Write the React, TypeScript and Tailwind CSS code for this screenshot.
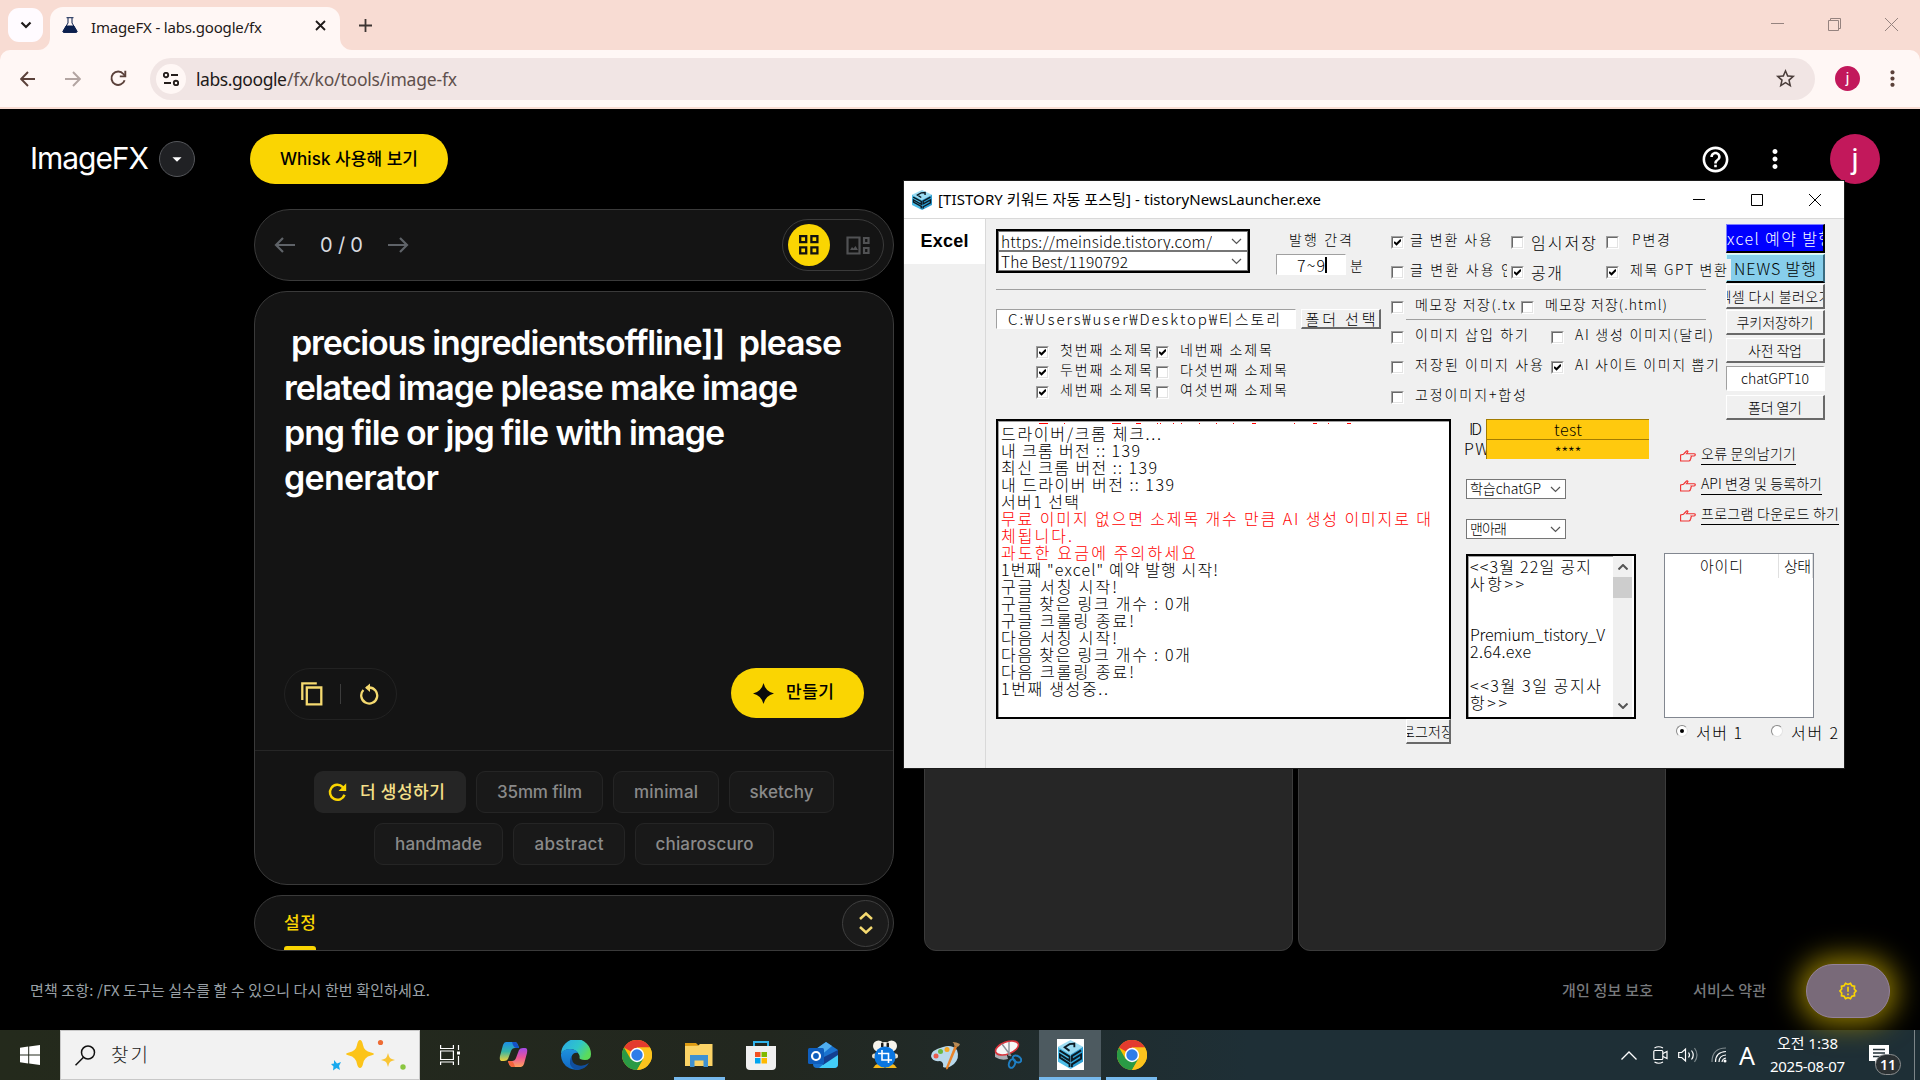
import { useLayoutEffect, useRef, type ReactNode } from "react";
import { MdStarOutline, MdHelpOutline, MdMoreVert, MdArrowDropDown, MdOutlineNewReleases } from "react-icons/md";

/* Text run whose tracking is computed so that it fills `w` pixels. */
function Fit({ w, children, className = "" }: { w: number; children: string; className?: string }) {
  const ref = useRef<HTMLSpanElement>(null);
  useLayoutEffect(() => {
    const el = ref.current;
    if (!el) return;
    el.style.letterSpacing = "0px";
    el.style.width = "max-content";
    const natural = el.getBoundingClientRect().width;
    const n = Math.max(1, children.length - 1);
    el.style.letterSpacing = children.length > 1 ? `${(w - natural) / n}px` : "0px";
    el.style.width = `${w}px`;
  }, [w, children]);
  return (
    <span ref={ref} className={`inline-block shrink-0 whitespace-pre text-left ${className}`}>
      {children}
    </span>
  );
}

/* ---------- browser chrome ---------- */

function TabStrip() {
  return (
    <div className="flex h-[50px] bg-[#f8dcd3] pt-[7px]">
      <div className="ml-2 mt-px flex h-[34px] w-[35px] items-center justify-center rounded-[11px] bg-[#fffbff]">
        <svg width="12" height="8" viewBox="0 0 12 8" fill="none" stroke="#1f1a19" strokeWidth="2.2"><path d="M1.5 1.5 6 6l4.5-4.5" /></svg>
      </div>
      <svg className="-ml-[5px] mr-0 mt-[31px]" width="12" height="12" viewBox="0 0 12 12"><path d="M12 0A12 12 0 0 1 0 12H12Z" fill="#fff7f5" /></svg>
      <div className="flex h-[43px] w-[290px] items-start rounded-t-[13px] bg-[#fff7f5] pl-3 pt-[10px]">
        <svg width="16" height="16" viewBox="0 0 16 16" fill="none" stroke="#0b1f4d"><path d="M4.5.7h7M6 1v5L1 14.2Q.7 15.3 2 15.3h12q1.3 0 1-1.1L10 6V1" /><path d="M4.2 9h7.6l3 5.4q0 .9-1 .9H2q-1 0-.8-.9Z" fill="#0b1f4d" /></svg>
        <Fit w={171} className="ml-[13px] font-['Noto_Sans'] text-[15px] leading-[20px] text-[#231a18]">ImageFX - labs.google/fx</Fit>
        <svg className="ml-[53px] mt-[3px]" width="11" height="11" viewBox="0 0 11 11" stroke="#1f1a19" strokeWidth="1.8"><path d="m1 1 9 9M10 1l-9 9" /></svg>
      </div>
      <svg className="mt-[31px]" width="12" height="12" viewBox="0 0 12 12"><path d="M0 0A12 12 0 0 0 12 12H0Z" fill="#fff7f5" /></svg>
      <svg className="ml-[7px] mt-3" width="13" height="13" viewBox="0 0 13 13" stroke="#3d3533" strokeWidth="1.8"><path d="M6.5 0v13M0 6.5h13" /></svg>
      <div className="ml-auto mr-[22px] mt-[11px] flex items-start gap-[44px]">
        <svg width="13" height="13" viewBox="0 0 13 13" stroke="#95837f"><path d="M0 5.5h13" /></svg>
        <svg width="13" height="13" viewBox="0 0 13 13" fill="none" stroke="#95837f"><path d="M.5 2.5h10v10H.5zM2.5 2.5v-2h10v10h-2" /></svg>
        <svg width="13" height="13" viewBox="0 0 13 13" stroke="#95837f"><path d="m0 0 13 13M13 0 0 13" /></svg>
      </div>
    </div>
  );
}

function AddressBar() {
  return (
    <div className="bg-[#f8dcd3]">
      <div className="flex h-[57px] items-center rounded-t-[10px] bg-[#fff7f5] pl-5">
        <svg width="16" height="16" viewBox="0 0 16 16" fill="none" stroke="#5b413a" strokeWidth="1.9"><path d="M15 8H1.5M8 1 1.2 8 8 15" /></svg>
        <svg className="ml-[29px]" width="16" height="16" viewBox="0 0 16 16" fill="none" stroke="#b3a5a2" strokeWidth="1.9"><path d="M0 8h14.5M8 1l6.8 7L8 15" /></svg>
        <svg className="ml-[29px]" width="17" height="17" viewBox="0 0 17 17" fill="none" stroke="#5b413a" strokeWidth="1.9"><path d="M14.6 10.2A6.7 6.7 0 1 1 13.4 4L15 6" /><path d="M15.3.8v5.6H9.8" /></svg>
        <div className="ml-[23px] flex h-[42px] w-[1665px] items-center rounded-full bg-[#f1e5e4] pl-[6px]">
          <span className="flex size-[30px] items-center justify-center rounded-full bg-[#fff7f5]">
            <svg width="16" height="14" viewBox="0 0 16 14" fill="none" stroke="#251d1b" strokeWidth="1.9"><circle cx="3" cy="3" r="2.2" /><path d="M8 3h7M1 11h7" /><circle cx="13" cy="11" r="2.2" /></svg>
          </span>
          <span className="ml-[10px] flex pt-px font-['Noto_Sans'] text-[17.5px] text-[#211a19]">
            <Fit w={91}>labs.google</Fit>
            <Fit w={170} className="text-[#5f504c]">/fx/ko/tools/image-fx</Fit>
          </span>
          <MdStarOutline className="ml-auto mr-[18px] size-[23px] text-[#4b3e3b]" />
        </div>
        <span className="ml-5 flex size-[25px] items-center justify-center rounded-full bg-[#c2185b] font-[Roboto] text-[15px] leading-none text-white">j</span>
        <MdMoreVert className="ml-[20px] size-[25px] text-[#5b413a]" />
      </div>
      <div className="h-[2px]" />
    </div>
  );
}

/* ---------- page ---------- */

const KR = "font-[Inter,'Noto_Sans_CJK_KR',sans-serif]";

function PageHeader() {
  return (
    <div className="flex h-[100px] items-center pl-[30px]">
      <Fit w={119} className="-mt-px font-[Inter,sans-serif] text-[30px] text-white">ImageFX</Fit>
      <span className="ml-[10px] flex size-9 items-center justify-center rounded-full border border-[#55575b] bg-[#202124] text-white"><MdArrowDropDown className="size-[22px]" /></span>
      <span className="ml-[55px] flex h-[50px] w-[198px] items-center justify-center rounded-full bg-[#fad502] font-medium text-black">
        <Fit w={138} className={"text-[17px] font-medium leading-6 " + KR}>Whisk 사용해 보기</Fit>
      </span>
      <MdHelpOutline className="ml-auto size-[31px] text-white" />
      <MdMoreVert className="ml-[29px] size-[30px] text-white" />
      <span className="ml-10 mr-10 flex size-[50px] items-center justify-center rounded-full bg-[#c2185b] font-[Roboto] text-[30px] leading-none text-white">j</span>
    </div>
  );
}

function Chip({ w, t, children }: { w: string; t: number; children: string }) {
  return (
    <span className={`flex h-[42px] items-center justify-center rounded-[9px] border border-[#252525] bg-[#191919] ${w}`}>
      <Fit w={t} className="mt-[2px] font-[Inter,sans-serif] text-[17px] font-medium text-[#8a8a8a]">{children}</Fit>
    </span>
  );
}

function PromptPanel() {
  return (
    <div className="w-[640px]">
      <div className="flex h-[72px] items-center rounded-full border border-[#3a3a3a] bg-[#141414] pl-[19px] pr-[9px]">
        <svg width="21" height="16" viewBox="0 0 21 16" fill="none" stroke="#5f6368" strokeWidth="2.2"><path d="M21 8H2M9 1 2 8l7 7" /></svg>
        <Fit w={43} className="ml-[25px] font-[Inter,sans-serif] text-[20px] text-[#dadce0]">0 / 0</Fit>
        <svg className="ml-[25px]" width="21" height="16" viewBox="0 0 21 16" fill="none" stroke="#5f6368" strokeWidth="2.2"><path d="M0 8h19M12 1l7 7-7 7" /></svg>
        <div className="ml-auto flex h-[52px] w-[102px] items-center rounded-full border border-[#3a3a3a] pl-[5px]">
          <span className="flex size-[42px] items-center justify-center rounded-full bg-[#fad502] text-black">
            <svg width="20" height="20" viewBox="0 0 20 20" fill="none" stroke="#111" strokeWidth="2.3"><path d="M1.2 1.2h6v6h-6zM12.4 1.2h6v6h-6zM1.2 12.4h6v6h-6zM12.4 12.4h6v6h-6z" /></svg>
          </span>
          <svg className="ml-[16px]" width="24" height="19" viewBox="0 0 24 19" fill="none" stroke="#515254" strokeWidth="2.200"><path d="M1.500 1.500h12v16h-12zM18 2h4.500v5H18zM18 12h4.500v5H18z" /><path d="M4 14 6 11l1.500 1.500L9.500 10 12 14Z" fill="#515254" stroke="none" /></svg>
        </div>
      </div>

      <div className="mt-[10px] flex h-[594px] flex-col rounded-[33px] border border-[#3a3a3a] bg-[#141414]">
        <div className="flex h-[376px] flex-col pl-[29px] pt-[28px] font-[Inter,sans-serif] text-[34px] font-semibold leading-[45px] text-white">
          <Fit w={551} className="ml-[7px]">{"precious ingredientsoffline]]  please"}</Fit>
          <Fit w={514}>related image please make image</Fit>
          <Fit w={441}>png file or jpg file with image</Fit>
          <Fit w={155}>generator</Fit>
        </div>
        <div className="flex h-[83px] items-start border-b border-[#262626] pl-[29px] pr-[29px]">
          <div className="flex h-[52px] w-[113px] items-center rounded-full border border-[#222] pl-4">
            <svg width="22" height="24" viewBox="0 0 22 24" fill="none" stroke="#f5da70" strokeWidth="2.300"><path d="M1.300 18V1.300h14.500M5.800 5.500h14.500v16.800H5.800z" /></svg>
            <span className="ml-[17px] h-5 w-px bg-[#3c3c3c]" />
            <svg className="ml-[18px]" width="20" height="22" viewBox="0 0 20 22" fill="none" stroke="#f5da70" strokeWidth="2.300"><path d="M4.400 7A8 8 0 1 0 10 4.500H7.500" /><path d="M11 .5 6 4.700l5 4.200Z" fill="#f5da70" stroke="none" /></svg>
          </div>
          <div className="ml-auto flex h-[50px] w-[133px] items-center rounded-full bg-[#fad502] pl-[22px]">
            <svg width="21" height="21" viewBox="0 0 21 21"><path d="M10.500 0q2 8.500 10.500 10.500Q12.500 12.500 10.500 21 8.500 12.500 0 10.500 8.500 8.500 10.500 0Z" fill="#0a0a0a" /></svg>
            <Fit w={48} className="-mt-[5px] ml-3 font-['Noto_Sans_CJK_KR'] text-[17px] font-medium leading-6 text-black">만들기</Fit>
          </div>
        </div>
        <div className="mt-[20px] flex justify-center gap-[10px]">
          <span className="flex h-[42px] w-[152px] items-center rounded-[9px] bg-[#252525] pl-[14px]">
            <svg width="19" height="19" viewBox="0 0 17 17" fill="none" stroke="#fad502" strokeWidth="2.200"><path d="M14.800 10.500A6.700 6.700 0 1 1 13.200 3.600L15 5.500" /><path d="M16.300.3v6.900H9.500Z" fill="#fad502" stroke="none" /></svg>
            <Fit w={85} className="-mt-[2px] ml-[13px] font-['Noto_Sans_CJK_KR'] text-[17px] font-medium leading-6 text-[#f5e08a]">더 생성하기</Fit>
          </span>
          <Chip w="w-[127px]" t={85}>35mm film</Chip>
          <Chip w="w-[106px]" t={64}>minimal</Chip>
          <Chip w="w-[105px]" t={64}>sketchy</Chip>
        </div>
        <div className="mt-[10px] flex justify-center gap-[10px]">
          <Chip w="w-[129px]" t={87}>handmade</Chip>
          <Chip w="w-[112px]" t={69}>abstract</Chip>
          <Chip w="w-[139px]" t={98}>chiaroscuro</Chip>
        </div>
      </div>

      <div className="mt-[10px] flex h-[56px] items-center rounded-full border border-[#3a3a3a] bg-[#141414] pl-[29px] pr-1">
        <span className="flex h-full flex-col pt-[14px]">
          <Fit w={32} className="font-['Noto_Sans_CJK_KR'] text-[17px] font-medium leading-6 text-[#fad502]">설정</Fit>
          <span className="mt-auto h-1 w-8 rounded-t-[3px] bg-[#fad502]" />
        </span>
        <span className="ml-auto flex size-[47px] items-center justify-center rounded-full border border-[#3f3f3f] bg-[#1b1b1b]">
          <svg width="14" height="22" viewBox="0 0 14 22" fill="none" stroke="#f5da70" strokeWidth="2.500"><path d="m1 7 6-5.500L13 7M1 15l6 5.500 6-5.500" /></svg>
        </span>
      </div>
    </div>
  );
}

function Page() {
  return (
    <div className="flex h-[921px] flex-col bg-black">
      <PageHeader />
      <div className="flex pl-[254px]">
        <PromptPanel />
        <div className="ml-[30px] flex gap-[5px]">
          <div className="h-[742px] w-[369px] rounded-[12px] border border-[#3b3b3b] bg-[#262626]" />
          <div className="h-[742px] w-[368px] rounded-[12px] border border-[#3b3b3b] bg-[#262626]" />
        </div>
      </div>
      <div className="flex flex-1 items-center pl-[30px] pr-[30px] font-['Noto_Sans_CJK_KR'] text-[15px] leading-5">
        <Fit w={400} className="-mt-[2px] text-[#9aa0a6]">면책 조항: /FX 도구는 실수를 할 수 있으니 다시 한번 확인하세요.</Fit>
        <Fit w={91} className="-mt-[2px] ml-auto font-medium text-[#77797c]">개인 정보 보호</Fit>
        <Fit w={73} className="-mt-[2px] ml-10 font-medium text-[#77797c]">서비스 약관</Fit>
        <span className="ml-10 flex h-[54px] w-[84px] items-center justify-center rounded-full border border-[#94829a] bg-[#796a79] shadow-[0_0_28px_7px_#8f7a00]">
          <MdOutlineNewReleases className="size-[20px] text-[#fad502]" />
        </span>
      </div>
    </div>
  );
}

/* ---------- launcher window ---------- */

function CubeIcon({ className = "" }: { className?: string }) {
  return (
    <svg className={className} viewBox="0 0 26 28" preserveAspectRatio="none">
      <path d="M13 0 26 6.500 13 14 0 6.500Z" fill="#9cdcf3" />
      <path d="M0 6.500 13 14V28L0 21Z" fill="#4dbde8" />
      <path d="M26 6.500 13 14V28L26 21Z" fill="#2d9fd4" />
      <path d="M17 7V3.500L12 4 7 7l5 3.500M1.500 10 12 16v4L2 14v3l10 6v3M24 10l-9.500 5.500v4L24 14v4l-9.500 5.500V26" fill="none" stroke="#0c1a24" strokeWidth="1.900" />
    </svg>
  );
}

function Box({ on = false }: { on?: boolean }) {
  return (
    <span className="flex size-[13px] shrink-0 border border-b-white border-l-[#a0a0a0] border-r-white border-t-[#a0a0a0]">
      <span className="flex size-full items-center justify-center border border-b-[#e3e3e3] border-l-[#696969] border-r-[#e3e3e3] border-t-[#696969] bg-white">
        {on && <svg width="7" height="7" viewBox="0 0 7 7" fill="none" stroke="#000" strokeWidth="2"><path d="M0 3 2.500 5.300 7 .8" /></svg>}
      </span>
    </span>
  );
}

function Option({ on, cell = "", gap = "ml-[11px]", t, label }: { on?: boolean; cell?: string; gap?: string; t: number; label: string }) {
  return (
    <span className={`flex h-full shrink-0 items-center ${cell}`}>
      <Box on={on} />
      <Fit w={t} className={`${gap} -mt-[6px] leading-5`}>{label}</Fit>
    </span>
  );
}

function PushButton({ className, t, children }: { className: string; t: number; children: string }) {
  return (
    <span className={`flex w-[99px] shrink-0 items-center justify-center overflow-hidden border border-b-2 border-r-2 ${className}`}>
      <Fit w={t} className="-mt-px leading-5">{children}</Fit>
    </span>
  );
}

const GRAY_BTN = "border-b-[#696969] border-r-[#696969] border-l-white border-t-white bg-[#f0f0f0]";

function Caret() {
  return <svg width="11" height="7" viewBox="0 0 11 7" fill="none" stroke="#555" strokeWidth="1.200"><path d="m1 1 4.500 4.500L10 1" /></svg>;
}

function Combo({ t, children }: { t: number; children: string }) {
  return (
    <span className="flex h-5 items-center border border-[#767676] bg-white pl-[2px] pr-[5px]">
      <span className="h-[18px] overflow-hidden"><Fit w={t} className="text-[15.500px] leading-[19px]">{children}</Fit></span>
      <span className="ml-auto"><Caret /></span>
    </span>
  );
}

function Settings() {
  return (
    <div className="w-[710px] shrink-0">
      <div className="flex h-[71px] border-b border-[#a0a0a0]">
        <div className="mt-[10px] flex h-[44px] w-[254px] shrink-0 flex-col border-2 border-black bg-white">
          <Combo t={211}>https://meinside.tistory.com/</Combo>
          <Combo t={127}>The Best/1190792</Combo>
        </div>
        <div className="ml-[26px] flex w-[115px] shrink-0 flex-col pt-[10px]">
          <Fit w={63} className="ml-[13px] leading-5">발행 간격</Fit>
          <div className="mt-[5px] flex items-center">
            <span className="flex h-[21px] w-[70px] items-center border border-b-white border-l-[#a0a0a0] border-r-white border-t-[#a0a0a0] bg-white pl-5">
              <Fit w={28} className="text-[16px] leading-5">7~9</Fit>
              <span className="h-4 w-[2px] bg-black" />
            </span>
            <Fit w={13} className="ml-1 leading-5">분</Fit>
          </div>
        </div>
        <div className="flex flex-col pt-[8px]">
          <div className="flex h-[30px]">
            <Option on cell="w-[120px]" gap="ml-[6px]" t={82} label="글 변환 사용" />
            <span className="flex w-[95px] shrink-0 items-center"><Box /><Fit w={65} className="-mt-px ml-[7px] text-[16px] leading-5">임시저장</Fit></span>
            <Option gap="ml-[13px]" t={38} label="P변경" />
          </div>
          <div className="flex h-[30px]">
            <span className="flex w-[116px] shrink-0 overflow-hidden"><Option gap="ml-[6px]" t={104} label="글 변환 사용 안" /></span>
            <span className="ml-1 flex w-[95px] shrink-0 items-center bg-[#f0f0f0]"><Box on /><Fit w={31} className="-mt-px ml-[7px] text-[16px] leading-5">공개</Fit></span>
            <span className="z-10 flex shrink-0 items-center"><Box on /><span className="-mt-[6px] ml-[8px] bg-[#f0f0f0] pl-[3px] pr-1"><Fit w={97} className="block leading-5">제목 GPT 변환</Fit></span></span>
          </div>
        </div>
      </div>
      <div className="flex">
        <div className="w-[395px] shrink-0 pt-[19px]">
          <div className="flex">
            <span className="flex h-5 w-[300px] items-center border border-b-white border-l-[#a0a0a0] border-r-white border-t-[#a0a0a0] bg-white pl-[11px]">
              <Fit w={272} className="text-[15px] leading-5">C:₩Users₩user₩Desktop₩티스토리</Fit>
            </span>
            <span className={`ml-[5px] flex h-5 w-20 items-center justify-center overflow-hidden border border-b-2 border-r-2 ${GRAY_BTN}`}>
              <Fit w={70} className="text-[15px] leading-5">폴더 선택</Fit>
            </span>
          </div>
          <div className="ml-10 mt-[13px] grid auto-rows-[20px] grid-cols-[120px_160px]">
            <Option on t={92} label="첫번째 소제목" />
            <Option on t={92} label="네번째 소제목" />
            <Option on t={92} label="두번째 소제목" />
            <Option t={107} label="다섯번째 소제목" />
            <Option on t={92} label="세번째 소제목" />
            <Option t={107} label="여섯번째 소제목" />
          </div>
        </div>
        <div className="flex flex-col pt-[2px]">
          <div className="flex h-[30px]">
            <span className="flex w-[125px] shrink-0 overflow-hidden"><Option t={106} label="메모장 저장(.txt" /></span>
            <span className="ml-[5px] shrink-0 bg-[#f0f0f0]"><Option t={122} label="메모장 저장(.html)" /></span>
          </div>
          <div className="-mt-[3px] mb-[2px] ml-[15px] h-px w-[300px] bg-[#a0a0a0]" />
          <div className="flex h-[30px]">
            <Option cell="w-[160px]" t={113} label="이미지 삽입 하기" />
            <Option t={138} label="AI 생성 이미지(달리)" />
          </div>
          <div className="flex h-[30px]">
            <Option cell="w-[160px]" t={128} label="저장된 이미지 사용" />
            <Option on t={144} label="AI 사이트 이미지 뽑기" />
          </div>
          <div className="flex h-[30px]"><Option t={111} label="고정이미지+합성" /></div>
        </div>
      </div>
    </div>
  );
}

function SideButtons() {
  return (
    <div className="ml-5 flex flex-col pt-[5px]">
      <PushButton className="h-[29px] border-b-black border-l-[#7f7fff] border-r-black border-t-[#7f7fff] bg-[#0000ff] text-[16px] text-white" t={116}>Excel 예약 발행</PushButton>
      <PushButton className="mt-px h-[29px] border-b-black border-l-[#c9ffff] border-r-[#3a6b80] border-t-[#c9ffff] bg-[#87ceeb] text-[16px]" t={82}>NEWS 발행</PushButton>
      <PushButton className={`mt-px h-[25px] ${GRAY_BTN}`} t={113}>엑셀 다시 불러오기</PushButton>
      <PushButton className={`mt-[1px] h-[25px] ${GRAY_BTN}`} t={77}>쿠키저장하기</PushButton>
      <PushButton className={`mt-[3px] h-[25px] ${GRAY_BTN}`} t={54}>사전 작업</PushButton>
      <PushButton className="mt-[3px] h-[25px] border-b-white border-l-[#a0a0a0] border-r-white border-t-[#a0a0a0] bg-white" t={68}>chatGPT10</PushButton>
      <PushButton className={`mt-[4px] h-[25px] ${GRAY_BTN}`} t={54}>폴더 열기</PushButton>
    </div>
  );
}

const LOG: [string, number, boolean?][] = [
  ["드라이버/크롬 체크...", 160],
  ["내 크롬 버전 :: 139", 139],
  ["최신 크롬 버전 :: 139", 156],
  ["내 드라이버 버전 :: 139", 173],
  ["서버1 선택", 78],
  ["무료 이미지 없으면 소제목 개수 만큼 AI 생성 이미지로 대", 430, true],
  ["체됩니다.", 71, true],
  ["과도한 요금에 주의하세요", 195, true],
  ['1번째 "excel" 예약 발행 시작!', 217],
  ["구글 서칭 시작!", 116],
  ["구글 찾은 링크 개수 : 0개", 189],
  ["구글 크롤링 종료!", 133],
  ["다음 서칭 시작!", 116],
  ["다음 찾은 링크 개수 : 0개", 189],
  ["다음 크롤링 종료!", 133],
  ["1번째 생성중..", 107],
];

function LogColumn() {
  return (
    <div className="flex w-[455px] flex-col items-end">
      <div className="flex h-[300px] w-full flex-col overflow-hidden border-2 border-black bg-white">
        <div className="h-full border-l border-t border-[#a0a0a0] pl-[2px] text-[16px]">
          <svg className="-mt-px block" width="440" height="4" viewBox="0 0 440 4" stroke="#f00"><path d="M38 2.500h9M63 2.500h1M111 2.500h9M135 2.500h5M156 2.500h1M159 2.500h1M172 2.500h1M180 2.500h1M198 2.500h1M215 2.500h1M232 2.500h1M251 2.500h4M293 2.500h1M312 2.500h4M327 2.500h1M346 2.500h4" /></svg>
          {LOG.map(([text, w, red], i) => (
            <div key={i} className={red ? "flex h-[17px] text-[#ff0000]" : "flex h-[17px]"}>
              <Fit w={w} className="leading-[17px]">{text}</Fit>
            </div>
          ))}
        </div>
      </div>
      <span className={`flex h-[25px] w-[45px] items-center justify-center overflow-hidden border border-b-2 border-r-2 ${GRAY_BTN}`}><Fit w={52} className="leading-5">로그저장</Fit></span>
    </div>
  );
}

function SmallSelect({ t, children }: { t: number; children: string }) {
  return (
    <span className="flex h-5 w-[100px] items-center border border-[#767676] bg-white pl-[3px] pr-[4px]">
      <Fit w={t} className="-mt-[2px] leading-[18px]">{children}</Fit>
      <span className="ml-auto"><Caret /></span>
    </span>
  );
}

function AccountColumn() {
  return (
    <div className="ml-[15px] w-[183px]">
      <div className="flex text-[16px]">
        <div className="-ml-[2px] flex w-[22px] flex-col overflow-hidden">
          <Fit w={13} className="ml-[5px] leading-[19px]">ID</Fit>
          <Fit w={25} className="leading-[21px]">PW</Fit>
        </div>
        <div className="w-[163px] text-center">
          <div className="flex h-5 items-center justify-center border-l border-t border-[#a37c00] bg-[#ffc90e]"><Fit w={28} className="-mt-px leading-[18px]">test</Fit></div>
          <div className="flex h-5 items-center justify-center border-l border-t border-[#a37c00] bg-[#ffc90e]"><Fit w={27} className="mt-[5px] leading-[18px]">****</Fit></div>
        </div>
      </div>
      <div className="mt-5 flex flex-col gap-5">
        <SmallSelect t={71}>학습chatGP</SmallSelect>
        <SmallSelect t={37}>맨아래</SmallSelect>
      </div>
      <div className="mt-[15px] flex h-[165px] w-[170px] border-2 border-black bg-white">
        <div className="flex w-[145px] flex-col border-l border-t border-[#a0a0a0] pl-px pt-px text-[16px] leading-[17px]">
          <Fit w={121}>{"<<3월 22일 공지"}</Fit>
          <Fit w={54}>{"사항>>"}</Fit>
          <Fit w={135} className="mt-[34px]">Premium_tistory_V</Fit>
          <Fit w={61}>2.64.exe</Fit>
          <Fit w={131} className="mt-[17px]">{"<<3월 3일 공지사"}</Fit>
          <Fit w={37}>{"항>>"}</Fit>
        </div>
        <div className="flex w-[19px] flex-col items-center bg-[#f0f0f0] py-2">
          <svg width="10" height="6" viewBox="0 0 10 6" fill="none" stroke="#555" strokeWidth="2"><path d="m.5 5.500 4.500-4.500 4.500 4.500" /></svg>
          <span className="mt-[7px] h-[21px] w-[19px] bg-[#cdcdcd]" />
          <svg className="mt-auto" width="10" height="6" viewBox="0 0 10 6" fill="none" stroke="#555" strokeWidth="2"><path d="m.5.5 4.500 4.500L9.500.5" /></svg>
        </div>
      </div>
    </div>
  );
}

function HandLink({ t, children }: { t: number; children: string }) {
  return (
    <span className="flex h-[30px] items-center">
      <svg className="mt-[5px]" width="16" height="12" viewBox="0 0 16 12" fill="none" stroke="#f03030" strokeWidth="1.100"><path d="M.6 5v6H9q1.500-.2 1.300-1.700 1-.6.500-1.700.8-.7.300-1.600H14q1.300-.2 1.300-1.200T14 3.800H6.500L8 1.500Q7.500.5 6.500 1L3.500 4.200Z" /></svg>
      <span className="ml-[5px] mt-px border-b border-black"><Fit w={t} className="block h-[15px] leading-[14px]">{children}</Fit></span>
    </span>
  );
}

function LinksColumn() {
  return (
    <div className="ml-[15px]">
      <div className="flex h-[134px] flex-col pl-4 pt-[19px]">
        <HandLink t={95}>오류 문의남기기</HandLink>
        <HandLink t={121}>API 변경 및 등록하기</HandLink>
        <HandLink t={138}>프로그램 다운로드 하기</HandLink>
      </div>
      <div className="flex h-[165px] w-[150px] items-start overflow-hidden border border-[#828790] bg-white font-['Noto_Sans_CJK_KR']">
        <span className="flex h-6 w-[114px] items-center justify-center border-r border-[#e0e0e0]"><Fit w={43} className="text-[15px]">아이디</Fit></span>
        <span className="flex h-6 w-[34px] items-center overflow-hidden border-r border-[#e0e0e0] pl-[5px]"><Fit w={27} className="text-[15px]">상태</Fit></span>
      </div>
      <div className="mt-[4px] flex h-5 items-center pl-[12px] text-[16px] leading-5">
        <span className="-mt-[2px] flex size-3 items-center justify-center rounded-full border border-[#8a8a8a] border-b-[#e3e3e3] border-r-[#e3e3e3] bg-white"><span className="size-1 rounded-full bg-black" /></span>
        <Fit w={46} className="ml-[8px]">서버 1</Fit>
        <span className="-mt-[2px] ml-[29px] size-3 rounded-full border border-[#8a8a8a] border-b-[#e3e3e3] border-r-[#e3e3e3] bg-white" />
        <Fit w={47} className="ml-[8px]">서버 2</Fit>
      </div>
    </div>
  );
}

function Launcher() {
  return (
    <div className="absolute left-[903px] top-[180px] h-[589px] w-[942px] overflow-hidden border border-[#1c1c1c] bg-[#f0f0f0] font-['Noto_Sans_CJK_KR',sans-serif] text-[14px] font-light text-black">
      <div className="flex h-[38px] items-center border-b border-[#d9d9d9] bg-white pl-2">
        <CubeIcon className="size-5" />
        <Fit w={383} className="-mt-px ml-[6px] font-['Noto_Sans','Noto_Sans_CJK_KR'] text-[15px] font-normal leading-5">[TISTORY 키워드 자동 포스팅] - tistoryNewsLauncher.exe</Fit>
        <div className="ml-auto mr-[23px] flex gap-[46px]">
          <svg width="12" height="12" viewBox="0 0 12 12" stroke="#000"><path d="M0 5.500h12" /></svg>
          <svg width="12" height="12" viewBox="0 0 12 12" fill="none" stroke="#000"><path d="M.5.500h11v11H.5z" /></svg>
          <svg width="12" height="12" viewBox="0 0 12 12" stroke="#000"><path d="m0 0 12 12M12 0 0 12" /></svg>
        </div>
      </div>
      <div className="flex h-[549px]">
        <div className="w-[82px] shrink-0 border-r border-[#d9d9d9]">
          <div className="flex h-[45px] items-center justify-center bg-white"><Fit w={48} className="font-['Liberation_Sans'] text-[18px] font-bold">Excel</Fit></div>
        </div>
        <div className="shrink-0 pl-[10px]">
          <div className="flex h-[200px]"><Settings /><SideButtons /></div>
          <div className="flex"><LogColumn /><AccountColumn /><LinksColumn /></div>
        </div>
      </div>
    </div>
  );
}

/* ---------- taskbar ---------- */

function Chrome() {
  return (
    <svg width="30" height="30" viewBox="0 0 30 30">
      <circle cx="15" cy="15" r="15" fill="#fbbc05" />
      <path d="M15 15 2 7.500A15 15 0 0 1 28 7.500H15Z" fill="#e33b2e" />
      <path d="M2 7.500A15 15 0 0 0 15 30L21.500 18.700 8.500 18.700Z" fill="#2a9a45" />
      <path d="M28 7.500H15L21.500 18.700 15 30A15 15 0 0 0 28 7.500Z" fill="#fcc31e" />
      <circle cx="15" cy="15" r="7.200" fill="#fff" />
      <circle cx="15" cy="15" r="5.700" fill="#2f7de9" />
    </svg>
  );
}

function Task({ children, open = false, active = false }: { children: ReactNode; open?: boolean; active?: boolean }) {
  return (
    <div className={`flex h-[50px] w-[61.8px] shrink-0 flex-col items-center ${active ? "bg-[#4d5a60]" : ""}`}>
      <div className="flex h-[47px] items-center pt-[2px]">{children}</div>
      {open && <div className={`h-[3px] bg-[#76b9ed] ${active ? "w-full" : "w-[51px]"}`} />}
    </div>
  );
}

function Taskbar() {
  return (
    <div className="flex h-[50px] bg-linear-to-r from-[#242a1c] from-0% via-[#22271f] via-40% to-[#1e2f36] to-65%">
      <div className="flex w-[60px] items-center justify-center">
        <svg width="20" height="20" viewBox="0 0 20 20" fill="#fff"><path d="M0 2.800 8.200 1.600v7.900H0zM9.200 1.500 20 0v9.500H9.200zM0 10.500h8.200v7.900L0 17.200zM9.200 10.500H20V20L9.200 18.500z" /></svg>
      </div>
      <div className="flex w-[360px] items-center border border-[#c8c8c8] bg-[#f2f2f2] pl-[14px]">
        <svg width="21" height="21" viewBox="0 0 21 21" fill="none" stroke="#111" strokeWidth="1.500"><circle cx="13" cy="7.500" r="6.500" /><path d="M8.500 12.200.5 20.300" /></svg>
        <Fit w={37} className="-mt-[3px] ml-[15px] font-['Noto_Sans_CJK_KR'] text-[19px] font-light leading-7 text-[#1b1b1b]">찾기</Fit>
        <svg className="ml-auto mr-[11px]" width="78" height="32" viewBox="0 0 78 32">
          <path d="M30 1q2 0 3 5 1 6 8 7.500 3 .7 3 1.500t-3 1.500q-7 1.500-8 8.500-1 4-3 4t-3-4q-1-7-8-8.500-3-.7-3-1.500t3-1.500q7-1.500 8-7.500 1-5 3-5Z" fill="#fcc419" />
          <path d="M58 14q1 4 2 5 1 .8 5 2-4 1.200-5 2-1 1-2 5-1-4-2-5-1-.8-5-2 4-1.200 5-2 1-1 2-5Z" fill="#f9c534" />
          <path d="m4 21 3 3.500L11 23l-2 4 1 4-3.500-2L3 31.500l.5-4L1 25l3-.5Z" fill="#19a9ee" />
          <circle cx="50.500" cy="3.500" r="2.600" fill="#ee6c34" /><circle cx="73" cy="28" r="2.700" fill="#8ac640" />
        </svg>
      </div>
      <div className="flex w-[63px] items-center pl-5">
        <svg width="21" height="20" viewBox="0 0 21 20" fill="none" stroke="#fff" strokeWidth="1.200"><path d="M.6 0v3.500h12.800V0M.6 6h12.800v8.500H.6zM.6 20v-3h12.800v3M18.500 0v5M18.500 11v9" /><path d="M17 6.500h3v3h-3z" fill="#fff" stroke="none" /></svg>
      </div>
      <Task>
        <svg width="29" height="27" viewBox="0 0 29 27">
          <defs>
            <linearGradient id="cpA" x1="0" y1="0" x2="0" y2="1"><stop offset="0" stopColor="#1b8de8" /><stop offset=".5" stopColor="#35b6a6" /><stop offset="1" stopColor="#f2d13a" /></linearGradient>
            <linearGradient id="cpB" x1="0" y1="0" x2="0" y2="1"><stop offset="0" stopColor="#a349e6" /><stop offset=".5" stopColor="#ec5598" /><stop offset="1" stopColor="#ffa35c" /></linearGradient>
          </defs>
          <path d="M7 1h9q2 0 3 3l1 3h-4q-3 0-4 3l-3 8q-1 2-4 2H3q-3 0-2-5L4 4q1-3 3-3Z" fill="url(#cpA)" />
          <path d="M22 26h-9q-2 0-3-3l-1-3h4q3 0 4-3l3-8q1-2 4-2h2q3 0 2 5l-3 11q-1 3-3 3Z" fill="url(#cpB)" />
          <path d="M13 1h3q2 0 3 3l1 3h-3q-2 0-3-3Z" fill="#1550c8" /><path d="M16 26h-3q-2 0-3-3l-1-3h3q2 0 3 3Z" fill="#f4643c" />
        </svg>
      </Task>
      <Task>
        <svg width="30" height="30" viewBox="0 0 30 30">
          <defs>
            <linearGradient id="edA" x1="0" y1="0" x2="1" y2=".5"><stop offset="0" stopColor="#2aa6e8" /><stop offset=".6" stopColor="#2fc6c9" /><stop offset="1" stopColor="#5bdb5a" /></linearGradient>
            <linearGradient id="edB" x1="0" y1="0" x2="0" y2="1"><stop offset="0" stopColor="#1d92dd" /><stop offset="1" stopColor="#1268c4" /></linearGradient>
          </defs>
          <path d="M0 14A15 15 0 0 1 30 14q0 6-6 6-6 0-5.500-2.500.5-1-.5-3Q15 9 9 9 2 9.500 0 14Z" fill="url(#edA)" />
          <path d="M0 14q2-5 9-5 6 0 8 4-5-1-6.500 4Q9.500 25 18 28q4 1 7-2A15 15 0 0 1 0 14Z" fill="url(#edB)" />
          <path d="M11 16q-1 7 5 9 6 2 12-2-4 7-13 7-7-3-6-9 0-3 2-5Z" fill="#104f9e" />
        </svg>
      </Task>
      <Task><Chrome /></Task>
      <Task open>
        <svg width="28" height="25" viewBox="0 0 28 25"><path d="M0 1h11l3 3H0z" fill="#dd9b13" /><path d="M0 4l13-.2L15 2h12.500v22H0z" fill="#fbd366" /><path d="M5 25V13h18v12h-4.500v-6.500h-9V25Z" fill="#3f91d2" /></svg>
      </Task>
      <Task>
        <svg width="30" height="30" viewBox="0 0 30 30"><path d="M8 7V2h14v5" fill="none" stroke="#31b3ec" strokeWidth="2" /><path d="M0 6h30v20q0 4-4 4H4q-4 0-4-4Z" fill="#f0f0f0" /><path d="M9 12h5.500v5H9z" fill="#f25022" /><path d="M15.500 12H21v5h-5.500z" fill="#7fba00" /><path d="M9 18h5.500v5.500H9z" fill="#00a4ef" /><path d="M15.500 18H21v5.500h-5.500z" fill="#ffb900" /></svg>
      </Task>
      <Task>
        <svg width="30" height="26" viewBox="0 0 30 26"><path d="M5 9 18 0l12 8v14q0 4-4 4H9q-4 0-4-4Z" fill="#1a73cf" /><path d="M8 7 18 0l6 4L12 14Z" fill="#50aef0" /><path d="M30 10v12q0 4-4 4H11L30 10Z" fill="#43cdf7" /><path d="M12 17 30 8v5L15 23Z" fill="#143f90" /><rect y="6" width="16" height="16" rx="1.500" fill="#0f5ebd" /><circle cx="8" cy="14" r="4" fill="none" stroke="#fff" strokeWidth="2.200" /></svg>
      </Task>
      <Task>
        <svg width="26" height="29" viewBox="0 0 26 29"><path d="M2 27q2-4 8-3l3 4H1ZM24 27q-2-4-8-3l-3 4h12Z" fill="#f5b91c" /><circle cx="6.500" cy="6" r="5.500" fill="#f7f4ec" /><circle cx="19.500" cy="6" r="5.500" fill="#f7f4ec" /><ellipse cx="13" cy="8" rx="7" ry="6" fill="#f7f4ec" /><path d="M9 3.500q1-2 2.500 0V7H9zM14.500 3.500q1.500-2 2.500 0V7h-2.500z" fill="#1a1a1a" /><circle cx="2.500" cy="16" r="2.500" fill="#e8dfc8" /><circle cx="23.500" cy="16" r="2.500" fill="#e8dfc8" /><circle cx="13" cy="17" r="10.500" fill="#0a76e0" /><path d="M10 10v10h10M6 13.500h10.500V23" fill="none" stroke="#fff" strokeWidth="1.600" /></svg>
      </Task>
      <Task>
        <svg width="30" height="30" viewBox="0 0 30 30"><path d="M12 7q9-3 14 3 3 8-3 14-6 5-11 3 1-5-3-6-8 1-9-5Q0 10 12 7Z" fill="#b9d9ec" /><circle cx="5" cy="16" r="2.500" fill="#ea5a4d" /><circle cx="9.500" cy="11.500" r="2.500" fill="#69b845" /><circle cx="16" cy="9.500" r="2.500" fill="#f5a623" /><path d="M23.500 6q-.5-3-2-4 4 0 7.500 2-1 3-3.500 3Z" fill="#b88a55" /><path d="M23.500 6 26 7 17 28.500q-2 2.500-2-1Z" fill="#e8832b" /></svg>
      </Task>
      <Task>
        <svg width="28" height="30" viewBox="0 0 28 30"><path d="M1 12v5q6 4 13 2l-2-7Z" fill="#a9adb3" /><ellipse cx="13" cy="8" rx="12" ry="6" transform="rotate(-20 13 8)" fill="#f7f7f7" stroke="#d8343c" strokeWidth="1.600" /><path d="m8 4 9 12M15 2v14" stroke="#8a9098" strokeWidth="1.400" /><g fill="none" stroke="#1f7fc4" strokeWidth="2"><ellipse cx="18" cy="23.500" rx="3" ry="4.500" transform="rotate(20 18 23.500)" /><ellipse cx="23" cy="19" rx="3" ry="4.500" transform="rotate(-60 23 19)" /></g></svg>
      </Task>
      <Task open active><span className="flex h-[31px] w-[27px] items-center justify-center bg-white"><CubeIcon className="h-[29px] w-[25px]" /></span></Task>
      <Task open><Chrome /></Task>

      <div className="ml-auto flex items-center text-white">
        <svg width="16" height="9" viewBox="0 0 16 9" fill="none" stroke="#fff" strokeWidth="1.300"><path d="m.5 8.500 7.500-7.500 7.500 7.500" /></svg>
        <svg className="ml-4" width="15" height="18" viewBox="0 0 15 18" fill="none" stroke="#fff" strokeWidth="1.200"><rect x=".8" y="4.500" width="9" height="9" rx="1" /><path d="m10 7.500 4-2v7l-4-2M1.500 2Q5.500-.5 10 2M1.500 16q4 2.500 8.500 0" /></svg>
        <svg className="ml-[10px]" width="21" height="16" viewBox="0 0 21 16" fill="none" stroke="#fff" strokeWidth="1.200"><path d="M.7 5.500h3L7.500 2v12L3.700 10.500h-3zM10.500 5.500q2 2.500 0 5M13.500 3.500q3.500 4.500 0 9" /><path d="M16.500 1q5 7 0 14" stroke="#7d888c" /></svg>
        <svg className="ml-[12px]" width="16" height="16" viewBox="0 0 16 16" fill="none" stroke="#fff" strokeWidth="1.200"><path d="M1 15Q1 1 15 1" stroke="#7d888c" /><path d="M4.500 15q0-10 10.500-10.500M8 15q0-6.500 7-7M11 15q.5-3.500 4-4" /><circle cx="14" cy="14" r="1.500" fill="#fff" stroke="none" /></svg>
        <span className="ml-[12px] font-['Noto_Sans'] text-[25px] leading-none">A</span>
        <div className="-mt-[2px] ml-[15px] flex w-[75px] flex-col items-center gap-[3px] font-['Noto_Sans','Noto_Sans_CJK_KR'] text-[15px] leading-5">
          <Fit w={61}>오전 1:38</Fit>
          <Fit w={75}>2025-08-07</Fit>
        </div>
        <div className="relative ml-6 mr-[24px]">
          <svg width="21" height="20" viewBox="0 0 21 20"><path d="M0 0h20v16H10l-4 4v-4H0z" fill="#fff" /><path d="M4 4.500h12M4 8h12M4 11.500h8" stroke="#243238" strokeWidth="1.300" /></svg>
          <span className="absolute left-[6px] top-[9px] flex h-[21px] w-[26px] items-center justify-center rounded-full border border-[#8c8f90] bg-[#2b3032] font-['Noto_Sans'] text-[14px] font-semibold leading-none">11</span>
        </div>
        <div className="mr-[5px] h-[50px] w-px bg-[#7c8588]" />
      </div>
    </div>
  );
}

export default function App() {
  return (
    <div className="relative h-[1080px] w-[1920px] overflow-hidden">
      <TabStrip />
      <AddressBar />
      <Page />
      <Taskbar />
      <Launcher />
    </div>
  );
}
